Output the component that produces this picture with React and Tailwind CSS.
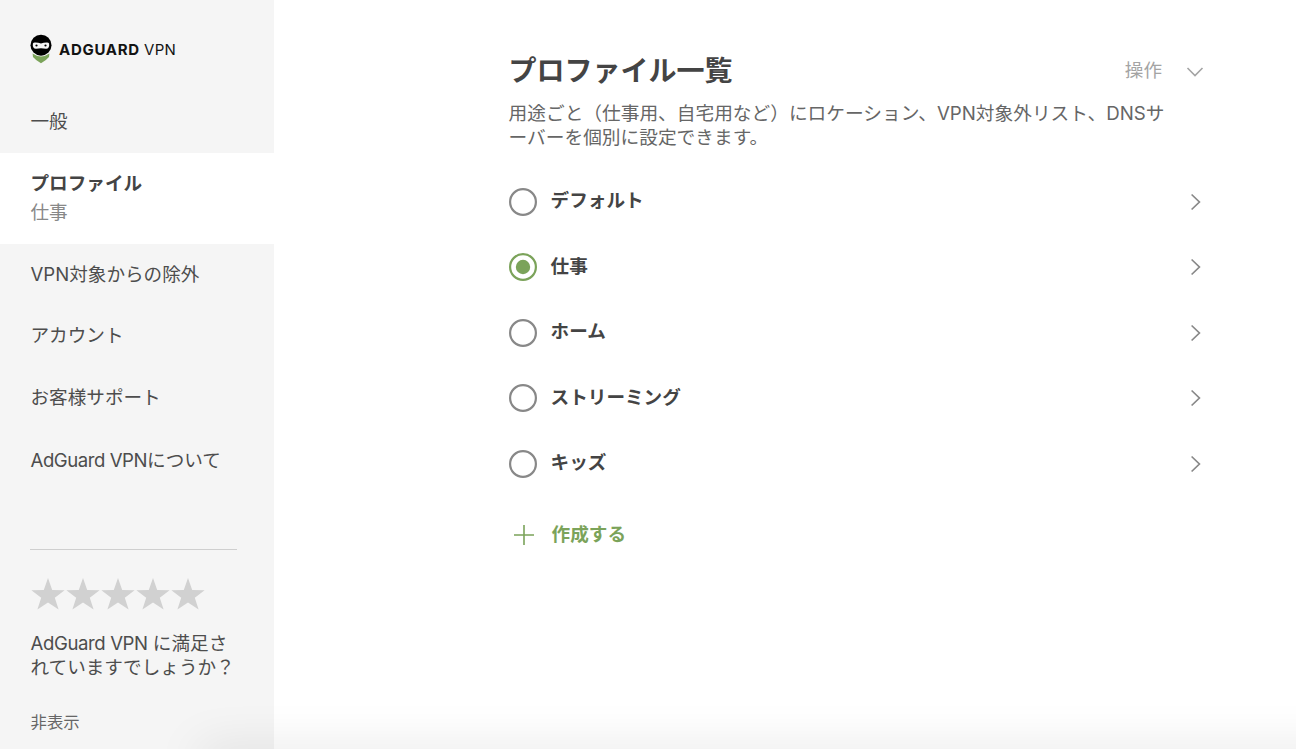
import React from "react";

const profiles = [
  { name: "デフォルト" },
  { name: "仕事", active: true },
  { name: "ホーム" },
  { name: "ストリーミング" },
  { name: "キッズ" },
];

const Logo = () => (
  <div className="flex items-center pl-[30px] pt-[34px] h-[64px] text-[#131313]">
    <svg width="22" height="30" viewBox="0 0 22 30" className="shrink-0">
      <path d="M2.6 19.6 Q11 25.6 19.4 19.6 L19 23 Q16.5 26.2 11 29.2 Q5.5 26.2 3 23 Z" fill="#7ba35a" />
      <circle cx="11" cy="11.2" r="10.5" fill="#000" />
      <path d="M2.9 9.6 Q3.4 8.3 5.2 8.4 Q8.4 8.6 11 9.4 Q13.6 8.6 16.8 8.4 Q18.6 8.3 19.1 9.6 Q19.6 12.2 18.4 13.8 Q17.6 14.9 16 14.8 Q13.4 14.2 11 14.2 Q8.6 14.2 6 14.8 Q4.4 14.9 3.6 13.8 Q2.4 12.2 2.9 9.6 Z" fill="#f5f5f5" />
      <circle cx="6.5" cy="11.5" r="1.1" fill="#000" />
      <circle cx="15.5" cy="11.5" r="1.1" fill="#000" />
    </svg>
    <div className="flex items-center pl-[7px] text-[15px] leading-none whitespace-nowrap">
      <span className="w-[85px] font-bold tracking-[0.7px]">ADGUARD</span>
      <span className="tracking-[0.3px]">VPN</span>
    </div>
  </div>
);

const Star = () => (
  <svg width="35.1" height="34" viewBox="0 0 35.1 34" className="shrink-0">
    <path d="M17 0 L21.2 11.9 L33.6 12.3 L23.8 19.8 L27.6 31.5 L17 24.4 L6.4 31.5 L10.2 19.8 L.4 12.3 L12.8 11.9 Z" fill="#d1d1d1" />
  </svg>
);

const Sidebar = () => (
  <aside className="w-[274px] shrink-0 bg-[#f5f5f5] flex flex-col">
    <Logo />
    <nav className="flex flex-col pt-[27px]">
      <a className="h-[62px] px-[30.5px] flex items-center">一般</a>
      <div className="h-[91px] px-[30.5px] pt-[16px] bg-white">
        <div className="h-[28px] leading-[28px] font-bold text-[#444]">プロファイル</div>
        <div className="h-[28px] leading-[30px] text-[#888]">仕事</div>
      </div>
      <a className="h-[61px] px-[30.5px] flex items-center">VPN対象からの除外</a>
      <a className="h-[62px] px-[30.5px] flex items-center">アカウント</a>
      <a className="h-[62px] px-[30.5px] flex items-center">お客様サポート</a>
      <a className="h-[62px] px-[30.5px] pt-[2px] flex items-center">
        <span className="tracking-[-0.45px]">AdGuard VPN</span>について
      </a>
    </nav>

    {/* Rating */}
    <div className="ml-[30px] mr-[37px] mt-[58px] border-t border-[#cfcfcf] pt-[28px]">
      <div className="flex pl-px">
        <Star />
        <Star />
        <Star />
        <Star />
        <Star />
      </div>
      <p className="mt-[19px] pl-[0.5px] leading-[24px] whitespace-nowrap">
        <span className="tracking-[-0.4px]">AdGuard VPN</span> に満足さ
        <br />
        れていますでしょうか？
      </p>
      <button className="mt-[31px] pl-[0.5px] block text-[16.4px] leading-[24px] text-[#666]">非表示</button>
    </div>
  </aside>
);

const ProfileRow = ({ name, active }) => (
  <div className="flex items-center h-[65.5px]">
    <svg width="28" height="28" viewBox="0 0 28 28" className="shrink-0" fill="none">
      <circle cx="14" cy="14" r="12.9" stroke={active ? "#7ba35a" : "#888"} strokeWidth="2.2" />
      {active && <circle cx="14" cy="14" r="7.2" fill="#7ba35a" />}
    </svg>
    <span className="ml-[14px] mb-px grow font-bold">{name}</span>
    <svg width="12" height="18" viewBox="0 0 12 18" className="mr-[3px]" fill="none" stroke="#888" strokeWidth="1.7">
      <path d="M1.6 1.5 L9.4 9 L1.6 16.5" />
    </svg>
  </div>
);

const App = () => {
  return (
    <div className="relative w-full h-[749px] overflow-hidden bg-white flex text-[18.6px] text-[#4d4d4d] font-['Inter','Noto_Sans_CJK_JP',sans-serif]">
      <Sidebar />

      <main className="w-[696px] ml-[234.6px] pt-[51px]">
        <div className="flex items-center h-[40px]">
          <h1 className="grow text-[28px] leading-[40px] font-bold text-[#444]">プロファイル一覧</h1>
          <span className="text-[#a4a4a4]">操作</span>
          <svg width="18" height="12" viewBox="0 0 18 12" className="ml-[24px] mt-px mr-[0.6px]" fill="none" stroke="#a4a4a4" strokeWidth="1.6">
            <path d="M1.5 2 L9 9.5 L16.5 2" />
          </svg>
        </div>
        <p className="mt-[11px] text-[18.7px] leading-[24.4px] text-[#666] whitespace-nowrap">
          用途ごと（仕事用、自宅用など）にロケーション、VPN対象外リスト、DNSサ
          <br />
          ーバーを個別に設定できます。
        </p>

        {/* Profiles */}
        <div className="mt-[18.3px] text-[#444]">
          {profiles.map((p) => (
            <ProfileRow key={p.name} name={p.name} active={p.active} />
          ))}
        </div>

        <button className="mt-[18px] h-[40px] flex items-center font-bold text-[#7ba35a]">
          <svg width="22" height="22" viewBox="0 0 22 22" className="ml-[4px] mt-px" fill="none" stroke="#7ba35a" strokeWidth="1.6">
            <path d="M11 1 V21 M1 11 H21" />
          </svg>
          <span className="ml-[17px]">作成する</span>
        </button>
      </main>

      {/* Soft shade along the bottom edge */}
      <div className="absolute left-[200px] right-[-60px] bottom-[-22px] h-[20px] shadow-[0_0_48px_rgba(0,0,0,0.15)]"></div>
    </div>
  );
};

export default App;
